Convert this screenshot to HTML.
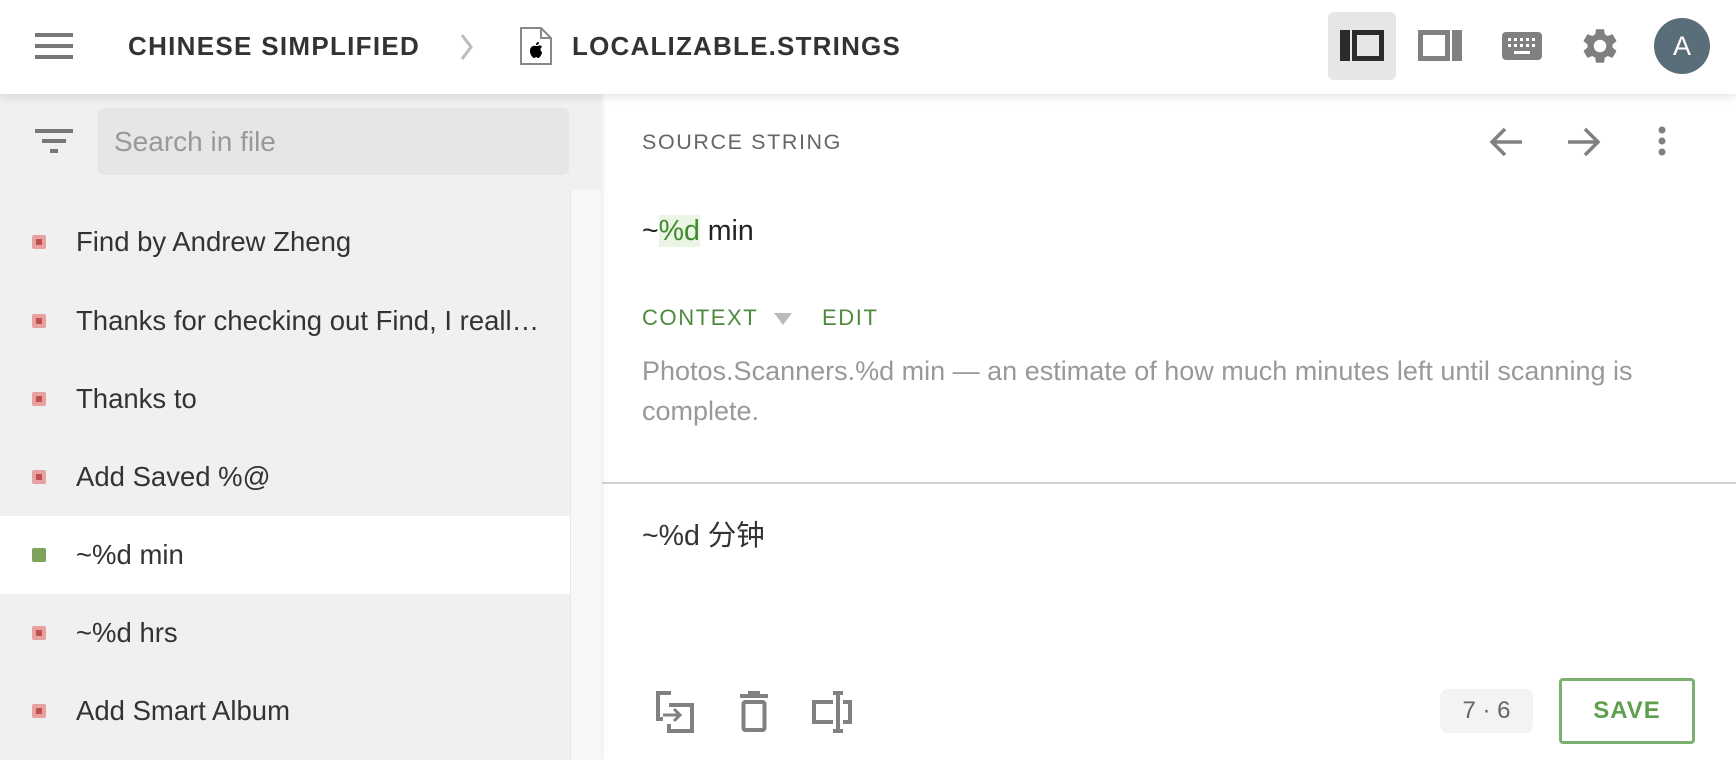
<!DOCTYPE html>
<html><head><meta charset="utf-8"><style>
*{margin:0;padding:0;box-sizing:border-box}
body{width:1736px;height:760px;overflow:hidden;background:#fff;font-family:"Liberation Sans","Noto Sans CJK SC",sans-serif;position:relative}
.hdr{position:absolute;left:0;top:0;width:1736px;height:94px;background:#fff;z-index:5;box-shadow:0 2px 10px rgba(0,0,0,.12)}
.abs{position:absolute}
.side{position:absolute;left:0;top:94px;width:601px;height:666px;background:#f0f0f0;box-shadow:2px 0 4px rgba(0,0,0,.08)}
.row{position:absolute;left:0;width:570px;height:78px;font-size:27.5px;color:#333;line-height:78px;padding-left:76px;white-space:nowrap;overflow:hidden}
.row .d{position:absolute;left:32px;top:32px;width:14px;height:14px;background:#e8a0a0;border-radius:2px}
.row .d::after{content:"";position:absolute;left:4px;top:4px;width:6px;height:6px;background:#c0504d}
.row .d.ok{background:#7ea35b}
.row .d.ok::after{display:none}
.g{color:#4e8a3e}
</style></head><body>
<div class="hdr">
 <div class="abs" style="left:35px;top:33px;width:38px;height:4px;background:#777"></div>
 <div class="abs" style="left:35px;top:44px;width:38px;height:4px;background:#777"></div>
 <div class="abs" style="left:35px;top:55px;width:38px;height:4px;background:#777"></div>
 <div class="abs" style="left:128px;top:31px;font-size:26px;font-weight:bold;color:#333;letter-spacing:1.3px">CHINESE SIMPLIFIED</div>
 <svg class="abs" style="left:457px;top:32px" width="20" height="30"><path d="M5 3 L14 15 L5 27" stroke="#bbb" stroke-width="3" fill="none"/></svg>
 <svg class="abs" style="left:519px;top:26px" width="34" height="40"><path d="M2 2 H22 L32 12 V38 H2 Z" fill="#fff" stroke="#888" stroke-width="2"/><path d="M22 2 V12 H32" fill="none" stroke="#888" stroke-width="2"/><path d="M17 20 c-3-1-6 1-6 5 c0 4 3 7 4 7 c1 0 2-1 2-1 c1 0 1 1 2 1 c2 0 4-4 4-6 c-2-1-2-4 0-5 c-1-2-3-2-4-1 z M17 19 c0-2 1-3 3-3 c0 2-1 3-3 3z" fill="#000"/></svg>
 <div class="abs" style="left:572px;top:31px;font-size:26px;font-weight:bold;color:#333;letter-spacing:1.2px">LOCALIZABLE.STRINGS</div>
 <div class="abs" style="left:1328px;top:12px;width:68px;height:68px;background:#e6e6e6;border-radius:6px"></div>
 <svg class="abs" style="left:1340px;top:30px" width="44" height="31"><rect x="0" y="0" width="10" height="31" fill="#2b2b2b"/><rect x="14.5" y="2.5" width="27" height="26" fill="none" stroke="#2b2b2b" stroke-width="5"/></svg>
 <svg class="abs" style="left:1418px;top:30px" width="44" height="31"><rect x="2.5" y="2.5" width="27" height="26" fill="none" stroke="#808080" stroke-width="5"/><rect x="34" y="0" width="10" height="31" fill="#808080"/></svg>
 <svg class="abs" style="left:1502px;top:32px" width="40" height="28"><rect width="40" height="28" rx="4" fill="#808080"/><g fill="#fff"><rect x="6" y="6" width="3" height="3"/><rect x="12" y="6" width="3" height="3"/><rect x="18" y="6" width="3" height="3"/><rect x="24" y="6" width="3" height="3"/><rect x="30" y="6" width="3" height="3"/><rect x="6" y="12" width="3" height="3"/><rect x="12" y="12" width="3" height="3"/><rect x="18" y="12" width="3" height="3"/><rect x="24" y="12" width="3" height="3"/><rect x="30" y="12" width="3" height="3"/><rect x="12" y="19" width="16" height="3"/></g></svg>
 <svg class="abs" style="left:1579px;top:25px" width="42" height="42" viewBox="0 0 24 24"><path fill="#808080" d="M19.14 12.94c.04-.3.06-.61.06-.94 0-.32-.02-.64-.07-.94l2.030-1.58a.49.49 0 0 0 .12-.61l-1.92-3.32a.488.488 0 0 0-.59-.22l-2.39.96c-.5-.38-1.03-.7-1.62-.94l-.36-2.54a.484.484 0 0 0-.48-.41h-3.84c-.24 0-.43.17-.47.41l-.36 2.54c-.59.24-1.13.57-1.62.94l-2.39-.96c-.22-.08-.47 0-.59.22L2.74 8.87c-.12.21-.08.47.12.61l2.03 1.58c-.05.3-.09.63-.09.94s.02.64.07.94l-2.03 1.58a.49.49 0 0 0-.12.61l1.92 3.32c.12.22.37.29.59.22l2.39-.96c.5.38 1.03.7 1.62.94l.36 2.54c.05.24.24.41.48.41h3.84c.24 0 .44-.17.47-.41l.36-2.54c.59-.24 1.13-.56 1.62-.94l2.39.96c.22.08.47 0 .59-.22l1.92-3.32c.12-.22.07-.47-.12-.61l-2.01-1.58zM12 15.6c-1.98 0-3.6-1.62-3.6-3.6s1.62-3.6 3.6-3.6 3.6 1.62 3.6 3.6-1.62 3.6-3.6 3.6z"/></svg>
 <div class="abs" style="left:1654px;top:18px;width:56px;height:56px;border-radius:50%;background:#5a6e79;color:#fff;font-size:27px;text-align:center;line-height:56px">A</div>
</div>

<div class="side">
 <svg class="abs" style="left:35px;top:35px" width="38" height="26"><rect x="0" y="0" width="38" height="4" fill="#777"/><rect x="7" y="10" width="24" height="4" fill="#777"/><rect x="15" y="20" width="8" height="4" fill="#777"/></svg>
 <div class="abs" style="left:98px;top:14px;width:471px;height:67px;background:#e6e6e6;border-radius:6px;font-size:28px;color:#999;line-height:67px;padding-left:16px">Search in file</div>
 <div class="abs" style="left:570px;top:96px;width:31px;height:570px;background:#f7f7f7;border-left:1px solid #e8e8e8"></div>
 <div class="row" style="top:109px"><span class="d"></span>Find by Andrew Zheng</div>
 <div class="row" style="top:188px"><span class="d"></span>Thanks for checking out Find, I reall…</div>
 <div class="row" style="top:266px"><span class="d"></span>Thanks to</div>
 <div class="row" style="top:344px"><span class="d"></span>Add Saved %@</div>
 <div class="row" style="top:422px;background:#fff"><span class="d ok"></span>~%d min</div>
 <div class="row" style="top:500px"><span class="d"></span>~%d hrs</div>
 <div class="row" style="top:578px"><span class="d"></span>Add Smart Album</div>
</div>

<div class="abs" style="left:642px;top:130px;font-size:21.5px;color:#666;letter-spacing:1.6px">SOURCE STRING</div>
<svg class="abs" style="left:1488px;top:125px" width="36" height="34"><path d="M34 17 H4 M17 4 L4 17 L17 30" stroke="#808080" stroke-width="3.5" fill="none"/></svg>
<svg class="abs" style="left:1566px;top:125px" width="36" height="34"><path d="M2 17 H32 M19 4 L32 17 L19 30" stroke="#808080" stroke-width="3.5" fill="none"/></svg>
<svg class="abs" style="left:1656px;top:125px" width="12" height="32"><circle cx="6" cy="5" r="3.5" fill="#808080"/><circle cx="6" cy="16" r="3.5" fill="#808080"/><circle cx="6" cy="27" r="3.5" fill="#808080"/></svg>

<div class="abs" style="left:642px;top:215px;font-size:28.5px;color:#222">~<span style="color:#3f8a2e;background:#eaf5e4">%d</span> min</div>
<div class="abs g" style="left:642px;top:305px;font-size:22px;letter-spacing:1.6px">CONTEXT</div>
<svg class="abs" style="left:773px;top:312px" width="20" height="14"><path d="M1 1 H19 L10 13 Z" fill="#bbb"/></svg>
<div class="abs g" style="left:822px;top:305px;font-size:22px;letter-spacing:1.6px">EDIT</div>
<div class="abs" style="left:642px;top:351px;width:1040px;font-size:27px;line-height:40px;color:#999">Photos.Scanners.%d min — an estimate of how much minutes left until scanning is complete.</div>

<div class="abs" style="left:602px;top:482px;width:1134px;height:2px;background:#d0d0d0"></div>
<div class="abs" style="left:642px;top:513px;font-size:28.5px;color:#333">~%d 分钟</div>

<svg class="abs" style="left:655px;top:689px" width="40" height="44"><path d="M16 4 H3 V30 H8" stroke="#808080" stroke-width="4" fill="none"/><path d="M14 16 H37 V42 H14 V35" stroke="#808080" stroke-width="4" fill="none"/><path d="M8 26 H24 M19 20 L25 26 L19 32" stroke="#808080" stroke-width="3" fill="none"/></svg>
<svg class="abs" style="left:740px;top:691px" width="28" height="42"><rect x="0" y="3" width="28" height="4" fill="#808080"/><rect x="8" y="0" width="12" height="4" fill="#808080"/><rect x="3.5" y="11" width="21" height="28" rx="2" fill="none" stroke="#808080" stroke-width="4"/></svg>
<svg class="abs" style="left:811px;top:691px" width="42" height="42"><path d="M22 11 H3 V31 H22" stroke="#808080" stroke-width="4" fill="none"/><path d="M32 11 H39 V31 H32" stroke="#808080" stroke-width="4" fill="none"/><path d="M27 3 V39 M22 2 H32 M22 40 H32" stroke="#808080" stroke-width="4" fill="none"/></svg>
<div class="abs" style="left:1440px;top:689px;width:93px;height:44px;background:#f3f3f3;border-radius:8px;font-size:24px;color:#666;text-align:center;line-height:44px">7 · 6</div>
<div class="abs" style="left:1559px;top:678px;width:136px;height:66px;border:3px solid #7cb06e;border-radius:4px;font-size:24px;font-weight:bold;color:#5e9e4e;text-align:center;line-height:60px;letter-spacing:1px">SAVE</div>
</body></html>
